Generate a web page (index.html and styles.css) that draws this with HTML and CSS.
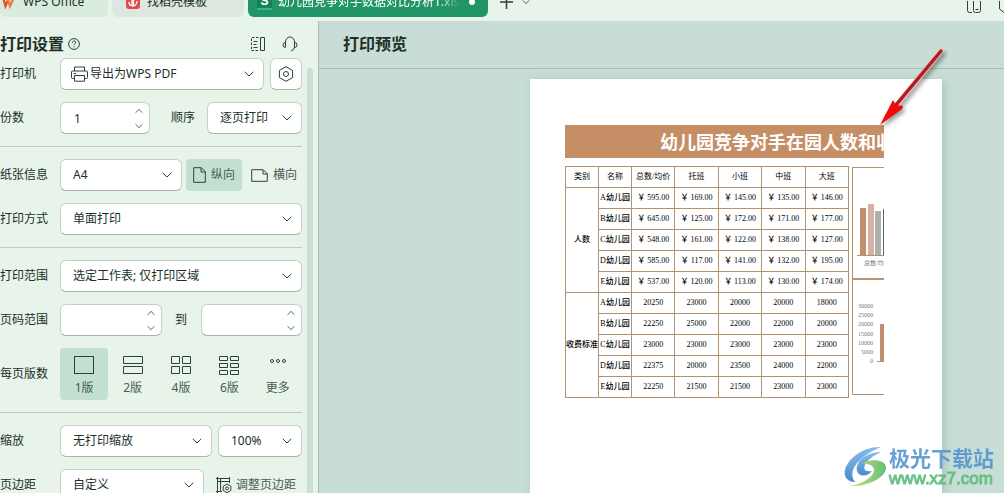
FILE: index.html
```html
<!DOCTYPE html>
<html lang="zh-CN">
<head>
<meta charset="utf-8">
<title>打印预览</title>
<link rel="stylesheet" href="styles.css">
</head>
<body>
<svg class="defs" aria-hidden="true">
  <symbol id="down" viewBox="0 0 10 6"><path d="M.7.8 5 5 9.3.8"/></symbol>
  <symbol id="up" viewBox="0 0 10 6"><path d="M.7 5.2 5 1l4.300 4.200"/></symbol>
</svg>
<header class="tabs">
  <a class="tab tab-home" href="#"><svg width="14" height="14" viewBox="0 0 14 14" fill="none" stroke-width="2.400"><path d="M0 2h2l2.500 9L7.500 4" stroke="#e8502c"/><path d="M6 2l3 9L13.500 1" stroke="#f07a35"/></svg>WPS Office</a>
  <a class="tab tab-store" href="#"><svg width="14" height="16" viewBox="0 0 14 16"><rect width="14" height="15" rx="3" fill="#e14b50"/><path d="M3 4l3 2v5M11 3L7.500 6v6M3 8c0 3 2 4 4 4s4-2 4-5" fill="none" stroke="#fff" stroke-width="1.300"/></svg>找稻壳模板</a>
  <a class="tab tab-file" href="#"><span class="sheet-icon">S</span><span class="file-name">幼儿园竞争对手数据对比分析1.xlsx</span><i class="dot"></i></a>
  <button class="plain" aria-label="新建"><svg width="15" height="14" viewBox="0 0 15 14"><path stroke-width="1.500" d="M1 7h13M7.500 0v14"/></svg></button>
  <button class="plain" aria-label="标签列表"><svg width="8" height="6" viewBox="0 0 10 6"><use href="#down"/></svg></button>
  <span class="window-tools">
    <svg width="14" height="16" viewBox="0 0 14 16"><path d="M5 11.500H2.500Q.5 11.500.5 9.500V0M6.500 0v9.500q0 2 2 2h3q2 0 2-2V0M8.500 8.500h3"/></svg>
    <svg width="5" height="16" viewBox="0 0 5 16"><path d="M.5 0v8L5 11.500"/></svg>
  </span>
</header>
<div class="workspace">
  <aside class="settings">
    <form class="form">
      <div class="title-row">
        <h1>打印设置</h1>
        <svg width="12" height="12" viewBox="0 0 12 12"><circle cx="6" cy="6" r="5.400"/><path d="M4.300 4.800c0-2.300 3.400-2.300 3.400-.2C7.700 5.800 6 5.800 6 7.200M6 8.300v1"/></svg>
        <span class="tools">
          <svg width="16" height="16" viewBox="0 0 16 16"><path d="M8.500 1.500h-7v13h7" stroke-dasharray="2.500 1.500"/><path d="M10.500 1.500h4v13h-4zM3.500 5.500h4M3.500 8.500h3M3.500 11.500h4"/></svg>
          <svg width="16" height="16" viewBox="0 0 16 16"><path d="M3.500 11V6a4.500 5 0 0 1 9 0v5q0 3-3.500 4M3.500 6.500Q1 6.500 1 9t2.500 2.500M12.500 6.500Q15 6.500 15 9t-2.500 2.500"/></svg>
        </span>
      </div>
      <div class="row">
        <label for="printer">打印机</label>
        <div class="select grow"><svg class="lead" width="17" height="16" viewBox="0 0 17 16"><path d="M3.500 5V1h10v4M3.500 12.500H1.500q-1 0-1-1V6q0-1 1-1h14q1 0 1 1v5.500q0 1-1 1h-2M3.500 9.500h10v5.700h-10zM2.500 7.500H5"/></svg>
          <select id="printer" class="with-lead"><option>导出为WPS PDF</option></select><svg class="arrow"><use href="#down"/></svg></div>
        <button type="button" class="square" aria-label="属性"><svg width="16" height="16" viewBox="0 0 16 16"><path d="M8 .7 14.600 4.400v7.200L8 15.300 1.400 11.600V4.400z"/><circle cx="8" cy="8" r="2.500"/></svg></button>
      </div>
      <div class="row">
        <label for="copies">份数</label>
        <div class="spin copies"><input id="copies" value="1"><button type="button" aria-label="增加"><svg><use href="#up"/></svg></button><button type="button" aria-label="减少"><svg><use href="#down"/></svg></button></div>
        <label class="mid" for="order">顺序</label>
        <div class="select order"><select id="order"><option>逐页打印</option></select><svg class="arrow"><use href="#down"/></svg></div>
      </div>
      <hr>
      <div class="row tight">
        <label for="paper">纸张信息</label>
        <div class="select grow"><select id="paper"><option>A4</option></select><svg class="arrow"><use href="#down"/></svg></div>
        <button type="button" class="choice active"><svg width="13" height="16" viewBox="0 0 13 16"><path d="M.7.7h7.600l4 4v10.600H.7zM8 1v4h4"/></svg>纵向</button>
        <button type="button" class="choice"><svg width="17" height="13" viewBox="0 0 17 13"><path d="M.7.7h11.600l4 4v7.600H.7zM12 1v4h4"/></svg>横向</button>
      </div>
      <div class="row">
        <label for="mode">打印方式</label>
        <div class="select grow"><select id="mode"><option>单面打印</option></select><svg class="arrow"><use href="#down"/></svg></div>
      </div>
      <hr>
      <div class="row">
        <label for="range">打印范围</label>
        <div class="select grow"><select id="range"><option>选定工作表; 仅打印区域</option></select><svg class="arrow"><use href="#down"/></svg></div>
      </div>
      <div class="row">
        <label for="from">页码范围</label>
        <div class="spin grow"><input id="from"><button type="button" aria-label="增加"><svg><use href="#up"/></svg></button><button type="button" aria-label="减少"><svg><use href="#down"/></svg></button></div>
        <label class="to" for="to">到</label>
        <div class="spin grow"><input id="to"><button type="button" aria-label="增加"><svg><use href="#up"/></svg></button><button type="button" aria-label="减少"><svg><use href="#down"/></svg></button></div>
      </div>
      <div class="row">
        <span class="label">每页版数</span>
        <div class="layouts">
          <button type="button" class="active"><svg width="22" height="20" viewBox="0 0 22 20"><rect x="1.500" y="1.500" width="19" height="17"/></svg>1版</button>
          <button type="button"><svg width="22" height="20" viewBox="0 0 22 20"><path d="M1.500 1.500h19v7h-19zM1.500 11.500h19v7h-19z"/></svg>2版</button>
          <button type="button"><svg width="22" height="20" viewBox="0 0 22 20"><path d="M1.500 1.500h8v7h-8zM12.500 1.500h8v7h-8zM1.500 11.500h8v7h-8zM12.500 11.500h8v7h-8z"/></svg>4版</button>
          <button type="button"><svg width="22" height="20" viewBox="0 0 22 20"><path d="M1.500 1.500h8v4h-8zM12.500 1.500h8v4h-8zM1.500 8.500h8v4h-8zM12.500 8.500h8v4h-8zM1.500 15.500h8v4h-8zM12.500 15.500h8v4h-8z"/></svg>6版</button>
          <button type="button"><svg width="22" height="20" viewBox="0 0 22 20"><circle cx="5" cy="6" r="1.500"/><circle cx="11" cy="6" r="1.500"/><circle cx="17" cy="6" r="1.500"/></svg>更多</button>
        </div>
      </div>
      <hr>
      <div class="row">
        <label for="scale">缩放</label>
        <div class="select grow"><select id="scale"><option>无打印缩放</option></select><svg class="arrow"><use href="#down"/></svg></div>
        <div class="select percent"><select aria-label="缩放比例"><option>100%</option></select><svg class="arrow"><use href="#down"/></svg></div>
      </div>
      <div class="row">
        <label for="margins">页边距</label>
        <div class="select grow"><select id="margins"><option>自定义</option></select><svg class="arrow"><use href="#down"/></svg></div>
        <button type="button" class="adjust"><svg width="16" height="16" viewBox="0 0 16 16"><path d="M0 1.500h14M1.500 0v16M4.500 1v14M0 14.500h6M2 4.500h12M13.500 0v6"/><path d="M11 7l3.800 2.200v4.300L11 15.700l-3.800-2.200V9.200z"/><circle cx="11" cy="11.400" r="1.500"/></svg>调整页边距</button>
      </div>
    </form>
    <div class="scrollbar"></div>
  </aside>
  <main class="preview">
    <h2>打印预览</h2>
    <div class="canvas">
      <article class="paper">
        <h3>幼儿园竞争对手在园人数和收</h3>
        <div class="sheet">
          <table>
            <colgroup><col class="c-name"><col class="c-name"><col class="c-num"><col class="c-num"><col class="c-num"><col class="c-num"><col class="c-num"></colgroup>
            <tr><th>类别</th><th>名称</th><th>总数/均价</th><th>托班</th><th>小班</th><th>中班</th><th>大班</th></tr>
            <tr><td rowspan="5">人数</td><td>A幼儿园</td><td>￥ 595.00</td><td>￥ 169.00</td><td>￥ 145.00</td><td>￥ 135.00</td><td>￥ 146.00</td></tr>
            <tr><td>B幼儿园</td><td>￥ 645.00</td><td>￥ 125.00</td><td>￥ 172.00</td><td>￥ 171.00</td><td>￥ 177.00</td></tr>
            <tr><td>C幼儿园</td><td>￥ 548.00</td><td>￥ 161.00</td><td>￥ 122.00</td><td>￥ 138.00</td><td>￥ 127.00</td></tr>
            <tr><td>D幼儿园</td><td>￥ 585.00</td><td>￥ 117.00</td><td>￥ 141.00</td><td>￥ 132.00</td><td>￥ 195.00</td></tr>
            <tr><td>E幼儿园</td><td>￥ 537.00</td><td>￥ 120.00</td><td>￥ 113.00</td><td>￥ 130.00</td><td>￥ 174.00</td></tr>
            <tr><td rowspan="5">收费标准</td><td>A幼儿园</td><td>20250</td><td>23000</td><td>20000</td><td>20000</td><td>18000</td></tr>
            <tr><td>B幼儿园</td><td>22250</td><td>25000</td><td>22000</td><td>22000</td><td>20000</td></tr>
            <tr><td>C幼儿园</td><td>23000</td><td>23000</td><td>23000</td><td>23000</td><td>23000</td></tr>
            <tr><td>D幼儿园</td><td>22375</td><td>20000</td><td>23500</td><td>24000</td><td>22000</td></tr>
            <tr><td>E幼儿园</td><td>22250</td><td>21500</td><td>21500</td><td>23000</td><td>23000</td></tr>
          </table>
          <svg class="charts" width="32" height="229" viewBox="0 0 32 229">
            <path class="frame" d="M32 .5H.5v227H32"/>
            <path class="split" d="M0 112h32"/>
            <path fill="#c29068" d="M8 41h6v47H8z"/><path fill="#d6b1a3" d="M16 37h6v51h-6z"/><path fill="#b0afac" d="M23 44h6v44h-6z"/><path fill="#4e6f77" d="M31 42h1v46h-1z"/>
            <path class="axis" d="M5 88.500h27M25 194.500h7"/>
            <text x="12" y="98">总数/均</text>
            <g text-anchor="end"><text x="21" y="141">30000</text><text x="21" y="150">25000</text><text x="21" y="159">20000</text><text x="21" y="169">15000</text><text x="21" y="178">10000</text><text x="21" y="187">5000</text><text x="21" y="196">0</text></g>
            <path fill="#c08d6e" d="M28 157h4v37h-4z"/>
          </svg>
        </div>
      </article>
    </div>
    <svg class="pointer" width="72" height="84" viewBox="0 0 72 84">
      <path d="M65 6 22 58" stroke="#eec0bc" stroke-width="5" stroke-linecap="round"/><path d="M65 6 20 60" stroke="#b31c20" stroke-width="3.500" stroke-linecap="round"/>
      <path d="M4 80 17 55l3 5 7 1-1 3z" fill="#f00a08"/>
    </svg>
    <div class="brand">
      <svg width="44" height="42" viewBox="0 0 44 42">
        <defs><linearGradient id="blue" x2="0" y2="1"><stop stop-color="#7ab8e8"/><stop offset="1" stop-color="#397fc4"/></linearGradient><linearGradient id="leaf"><stop stop-color="#d3df68"/><stop offset="1" stop-color="#53b96b"/></linearGradient></defs>
        <path fill="url(#blue)" d="M37 1C20 0 4 12 1 24c-2 9 5 12 10 12-8-10 2-25 26-35z"/>
        <path fill="url(#blue)" d="M37 6C22 6 11 16 13 25c2 6 10 6 15 0-7 1-9-2-7-6 2-5 8-9 16-13z"/>
        <path fill="url(#leaf)" d="M18 18c5-5 24-6 24 4 0 9-18 19-36 18 12-2 24-9 24-16 0-5-7-7-12-6z"/>
      </svg>
      <p><strong>极光下载站</strong><span>www.xz7.com</span></p>
    </div>
  </main>
</div>
</body>
</html>
```
FILE: styles.css
```css
* { box-sizing: border-box; }
body {
  margin: 0;
  height: 100vh;
  overflow: hidden;
  display: flex;
  flex-direction: column;
  background: #e8f3e9;
  color: #203029;
  font: 12px/16px "Noto Sans", "Noto Sans CJK SC", sans-serif;
}
.defs { position: absolute; width: 0; height: 0; }
svg { flex: none; }
button, input, select { font: inherit; color: inherit; margin: 0; }
button { border: 0; background: none; padding: 0; }
h1, h2, h3, p { margin: 0; }
.tabs svg, .form svg, symbol { fill: none; stroke: #2c4238; }

.tabs {
  flex: none;
  height: 21px;
  padding-bottom: 4px;
  display: flex;
  align-items: flex-end;
  overflow: hidden;
}
.tab {
  flex: none;
  height: 30px;
  display: flex;
  align-items: center;
  gap: 8px;
  border-radius: 6px;
  color: #203029;
  text-decoration: none;
  white-space: nowrap;
}
.tab-home { width: 108px; padding-left: 1px; margin-right: 4px; background: #d8ebdc; }
.tab-store { width: 132px; padding-left: 14px; gap: 7px; margin-right: 4px; background: #dee7df; }
.tab-store svg { stroke: none; }
.tab-file { width: 240px; padding: 0 13px 0 9px; gap: 6px; background: #229567; color: #fff; margin-right: 11px; }
.sheet-icon {
  width: 15px;
  height: 16px;
  border-bottom: 2px solid #39b583;
  background: #148256;
  font: bold 12px/14px "Liberation Sans", sans-serif;
  text-align: center;
}
.file-name { flex: 1; overflow: hidden; mask-image: linear-gradient(90deg, #000 88%, transparent); }
.dot { width: 6px; height: 6px; border-radius: 50%; background: #fff; margin-left: 3px; }
.plain { height: 30px; margin-right: 8px; display: flex; align-items: center; }
.window-tools { margin-left: auto; height: 20px; display: flex; align-items: flex-end; gap: 18px; }

.workspace { flex: 1; min-height: 0; display: flex; }
.settings { flex: none; width: 319px; display: flex; border-right: 1px solid #a9bbb2; overflow: hidden; }
.form { flex: 1; display: flex; flex-direction: column; gap: 12px; }
.scrollbar { width: 6px; margin: 47px 5px 0 5px; border-radius: 3px 3px 0 0; background: #c9dfd7; }
.title-row { height: 25px; display: flex; align-items: center; gap: 4px; padding-top: 20px; }
h1, h2 { font-size: 16px; line-height: 24px; font-weight: bold; }
.tools { margin-left: auto; padding-right: 4px; display: flex; gap: 16px; }
.row { flex: none; display: flex; align-items: center; gap: 6px; }
.row.tight { gap: 4px; }
.row > label:first-child, .label { flex: none; width: 60px; margin-right: -6px; }
.row.tight > label:first-child { margin-right: -4px; }
hr { flex: none; width: 100%; height: 1px; margin: 0; border: 0; background: #bfcac2; }
.grow { flex: 1; min-width: 0; }
.select, .spin { position: relative; height: 32px; }
.select select, .spin input, .square {
  width: 100%;
  height: 100%;
  border: 1px solid #c3d0c8;
  border-bottom-color: #a6b4ac;
  border-radius: 6px;
  background: #fff;
}
.select select { appearance: none; padding: 0 24px 0 12px; }
.select select.with-lead { padding-left: 29px; }
.spin input { padding: 0 24px 0 13px; }
.lead { position: absolute; left: 11px; top: 8px; }
.arrow { position: absolute; right: 10px; top: 13px; width: 10px; height: 6px; pointer-events: none; }
.form .arrow, .spin svg { stroke: #68766f; }
.spin button { position: absolute; right: 6px; top: 5px; width: 10px; height: 8px; display: flex; align-items: center; justify-content: center; }
.spin button:last-child { top: 20px; }
.spin svg { width: 8px; height: 6px; }
.square { flex: none; width: 32px; height: 32px; display: grid; place-items: center; }
.copies { width: 90px; }
.mid { margin-left: auto; margin-right: 6px; }
.order { width: 95px; }
.to { width: 27px; text-align: center; }
.percent { width: 84px; }
.choice { flex: none; width: 56px; height: 32px; display: flex; align-items: center; justify-content: center; gap: 5px; border-radius: 4px; color: #4a5b53; white-space: nowrap; }
.active { background: #c2e0cf; }
.layouts { flex: 1; display: grid; grid-template-columns: repeat(5, 1fr); }
.layouts button { height: 52px; display: flex; flex-direction: column; align-items: center; gap: 5px; padding-top: 7px; border-radius: 4px; color: #4a5b53; }
.adjust { width: 92px; display: flex; align-items: center; justify-content: center; gap: 4px; color: #4a5b53; white-space: nowrap; }

.preview { position: relative; flex: 1; min-width: 0; background: #c7ddd5; display: flex; flex-direction: column; overflow: hidden; }
h2 { flex: none; height: 48px; padding: 11px 24px; border-bottom: 1px solid #aebdb6; }
.canvas { flex: 1; display: flex; padding: 10px 62px 0 211px; }
.paper { flex: 1; min-width: 0; padding: 46px 58px 0 35px; background: #fff; box-shadow: 2px 2px 8px #a9c2b8; }
h3 {
  height: 33px;
  padding-left: 95px;
  overflow: hidden;
  white-space: nowrap;
  background: #c68e65;
  color: #fff;
  font: bold 18px/33px "Noto Sans CJK SC", sans-serif;
}
.sheet { display: flex; align-items: flex-start; gap: 3px; padding-top: 8px; overflow: hidden; }
table {
  flex: none;
  width: 284px;
  table-layout: fixed;
  border-collapse: collapse;
  color: #000;
  font: 8px/10px "Liberation Serif", "Noto Sans CJK SC", serif;
}
.c-name { width: 33px; }
tr { height: 21px; }
th, td { padding: 0; border: 1px solid #b3926f; text-align: center; font-weight: normal; white-space: nowrap; }
td { font-weight: 500; }
.charts { margin-top: 1px; font: 6px "Liberation Serif", "Noto Sans CJK SC", serif; fill: #777; }
.frame, .axis { fill: none; stroke: #b3926f; }
.split { stroke: #c29068; stroke-width: 2; }
.pointer { position: absolute; left: 557px; top: 24px; fill: none; filter: drop-shadow(2px 3px 2px #0006); }
.brand { position: absolute; right: 10px; bottom: 5px; display: flex; align-items: center; gap: 1px; opacity: .9; }
.brand p { display: flex; flex-direction: column; }
.brand strong { color: #5796d0; font: bold 21px/25px "Noto Sans CJK SC", sans-serif; }
.brand span { color: #5dbb7d; font: 17px/18px "Liberation Sans", sans-serif; -webkit-text-stroke: 1px #5dbb7d; }
```
